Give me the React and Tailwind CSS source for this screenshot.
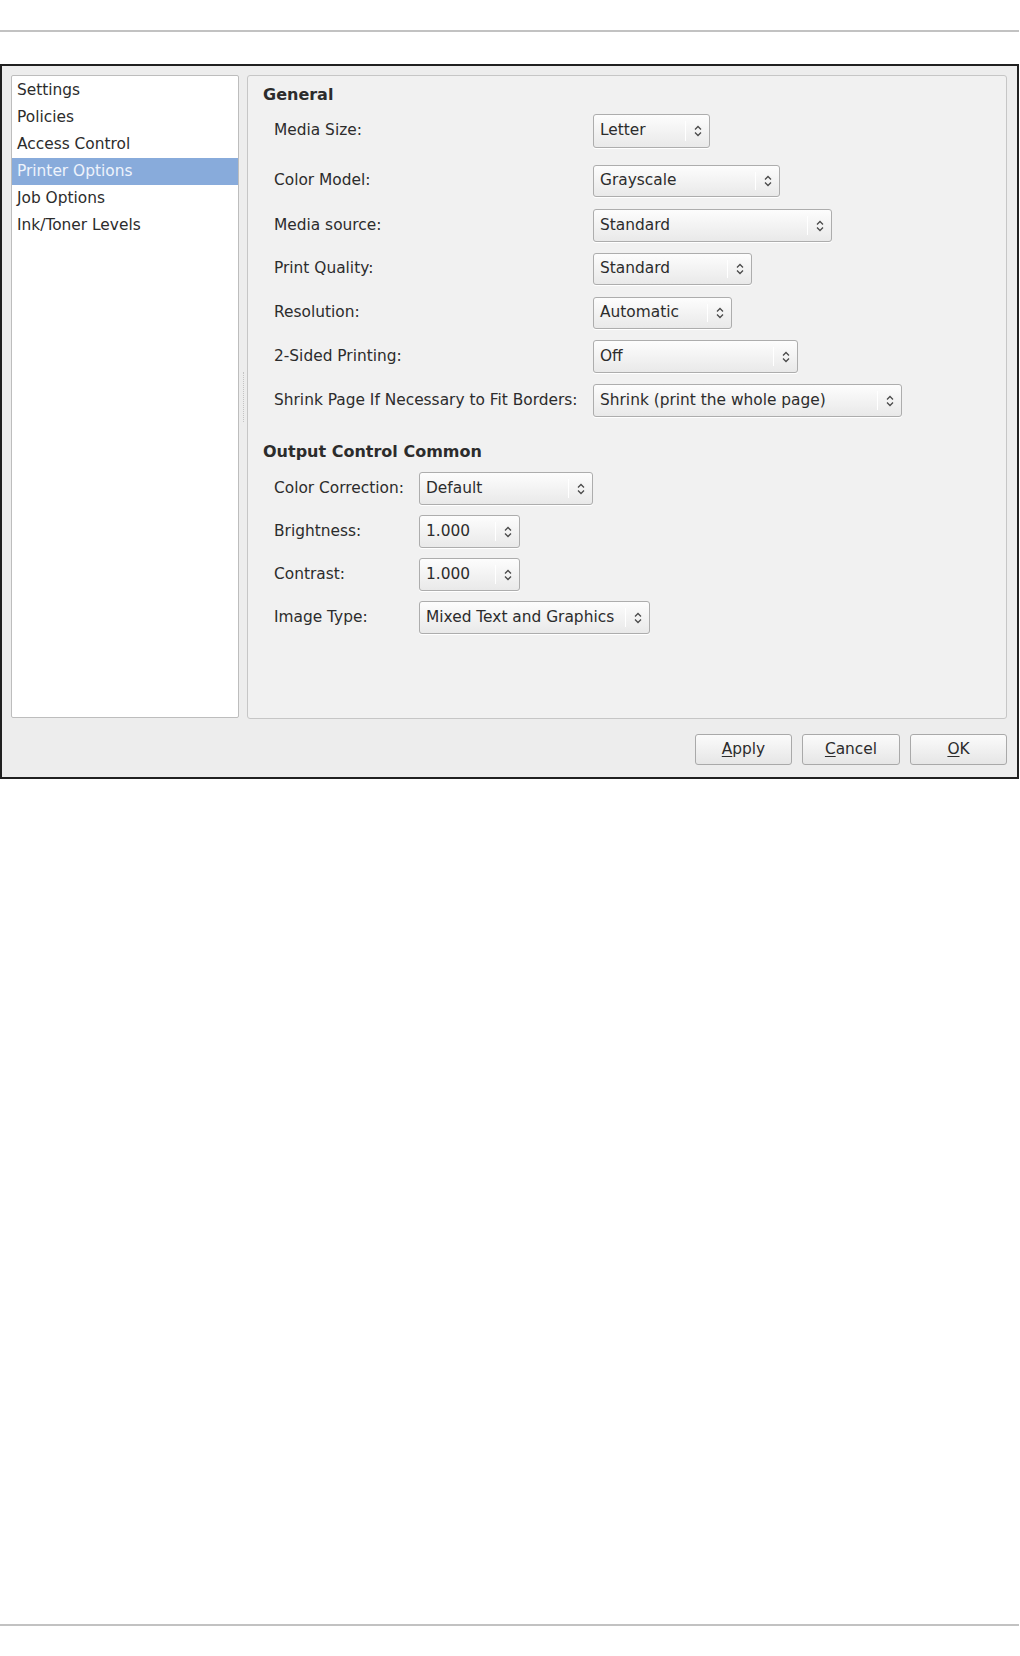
import React from "react";

const FONT = { fontFamily: '"DejaVu Sans", "Liberation Sans", sans-serif' };

const sidebar = ["Settings", "Policies", "Access Control", "Printer Options", "Job Options", "Ink/Toner Levels"];

const general = [
  { label: "Media Size:", value: "Letter", w: "w-[117px]", row: "mt-[9px] h-[34px]" },
  { label: "Color Model:", value: "Grayscale", w: "w-[187px]", row: "mt-[17px] h-[32px]" },
  { label: "Media source:", value: "Standard", w: "w-[239px]", row: "mt-[12px] h-[33px]" },
  { label: "Print Quality:", value: "Standard", w: "w-[159px]", row: "mt-[11px] h-[32px]" },
  { label: "Resolution:", value: "Automatic", w: "w-[139px]", row: "mt-[12px] h-[32px]" },
  { label: "2-Sided Printing:", value: "Off", w: "w-[205px]", row: "mt-[11px] h-[33px]" },
  { label: "Shrink Page If Necessary to Fit Borders:", value: "Shrink (print the whole page)", w: "w-[309px]", row: "mt-[11px] h-[33px]" },
];

const output = [
  { label: "Color Correction:", value: "Default", w: "w-[174px]" },
  { label: "Brightness:", value: "1.000", w: "w-[101px]" },
  { label: "Contrast:", value: "1.000", w: "w-[101px]" },
  { label: "Image Type:", value: "Mixed Text and Graphics", w: "w-[231px]" },
];

// GTK style up/down chevrons
function Arrows() {
  return (
    <svg width="8" height="12" viewBox="0 0 8 12" fill="none" stroke="#4a4a4a" strokeWidth="1.3">
      <path d="M1 4.5 L4 1.5 L7 4.5" />
      <path d="M1 7.5 L4 10.5 L7 7.5" />
    </svg>
  );
}

function Combo({ value, w }) {
  return (
    <div
      className={`${w} h-full flex items-center rounded-[3px] border border-[#adadad] bg-gradient-to-b from-[#fdfdfd] to-[#e9e9e9] shadow-[0_1px_0_#ffffff]`}
    >
      <span className="flex-1 pl-[6px] text-[15.4px] text-[#2c2c2c] whitespace-nowrap overflow-hidden">{value}</span>
      <div className="h-[60%] w-px bg-[#cacaca] border-r border-white" />
      <div className="w-[23px] flex items-center justify-center">
        <Arrows />
      </div>
    </div>
  );
}

function Button({ children, w }) {
  return (
    <button
      className={`${w} h-[31px] rounded-[3px] border border-[#a9a9a9] bg-gradient-to-b from-[#fbfbfb] to-[#e6e6e6] text-[15.4px] text-[#2c2c2c]`}
    >
      {children}
    </button>
  );
}

export default function App() {
  return (
    <div className="w-[1020px] h-[1656px] bg-white flex flex-col" style={FONT}>
      <div className="mt-[30px] h-[2px] w-[1019px] bg-[#c2c2c2]" />

      {/* dialog */}
      <div className="mt-[32px] w-[1019px] h-[715px] border-2 border-[#202020] bg-[#ededed] flex flex-col">
        <div className="flex pl-[9px] pt-[9px] pr-[10px] h-[653px]">
          {/* sidebar list */}
          <div className="w-[228px] h-[643px] bg-white border border-[#bdbdbd] rounded-[2px] pt-px">
            {sidebar.map((item) =>
              item === "Printer Options" ? (
                <div key={item} className="h-[27px] flex items-center pl-[5px] bg-[#88abdb] text-[#eef3fb] text-[15.4px]">
                  {item}
                </div>
              ) : (
                <div key={item} className="h-[27px] flex items-center pl-[5px] text-[#2c2c2c] text-[15.4px]">
                  {item}
                </div>
              )
            )}
          </div>

          {/* pane handle */}
          <div className="w-[8px] flex items-center justify-center">
            <div className="w-px h-[50px] border-l border-dotted border-[#c4c4c4]" />
          </div>

          {/* options panel */}
          <div className="flex-1 h-[644px] bg-[#f1f1f1] border border-[#c6c6c6] rounded-[3px] pl-[15px] pt-[9px] text-[#2c2c2c] text-[15.4px]">
            <div className="h-[20px] leading-[20px] font-bold text-[16px]">General</div>
            {general.map((r) => (
              <div key={r.label} className={`${r.row} flex items-center`}>
                <span className="w-[330px] pl-[11px] whitespace-nowrap">{r.label}</span>
                <Combo value={r.value} w={r.w} />
              </div>
            ))}

            <div className="mt-[25px] h-[20px] leading-[20px] font-bold text-[16px]">Output Control Common</div>
            {output.map((r) => (
              <div key={r.label} className="mt-[10px] h-[33px] flex items-center">
                <span className="w-[156px] pl-[11px] whitespace-nowrap">{r.label}</span>
                <Combo value={r.value} w={r.w} />
              </div>
            ))}
          </div>
        </div>

        {/* buttons */}
        <div className="mt-[15px] flex justify-end gap-[10px] pr-[10px]">
          <Button w="w-[97px]">
            <span className="underline underline-offset-2">A</span>pply
          </Button>
          <Button w="w-[98px]">
            <span className="underline underline-offset-2">C</span>ancel
          </Button>
          <Button w="w-[97px]">
            <span className="underline underline-offset-2">O</span>K
          </Button>
        </div>
      </div>

      <div className="mt-[845px] h-[2px] w-[1019px] bg-[#c2c2c2]" />
    </div>
  );
}
